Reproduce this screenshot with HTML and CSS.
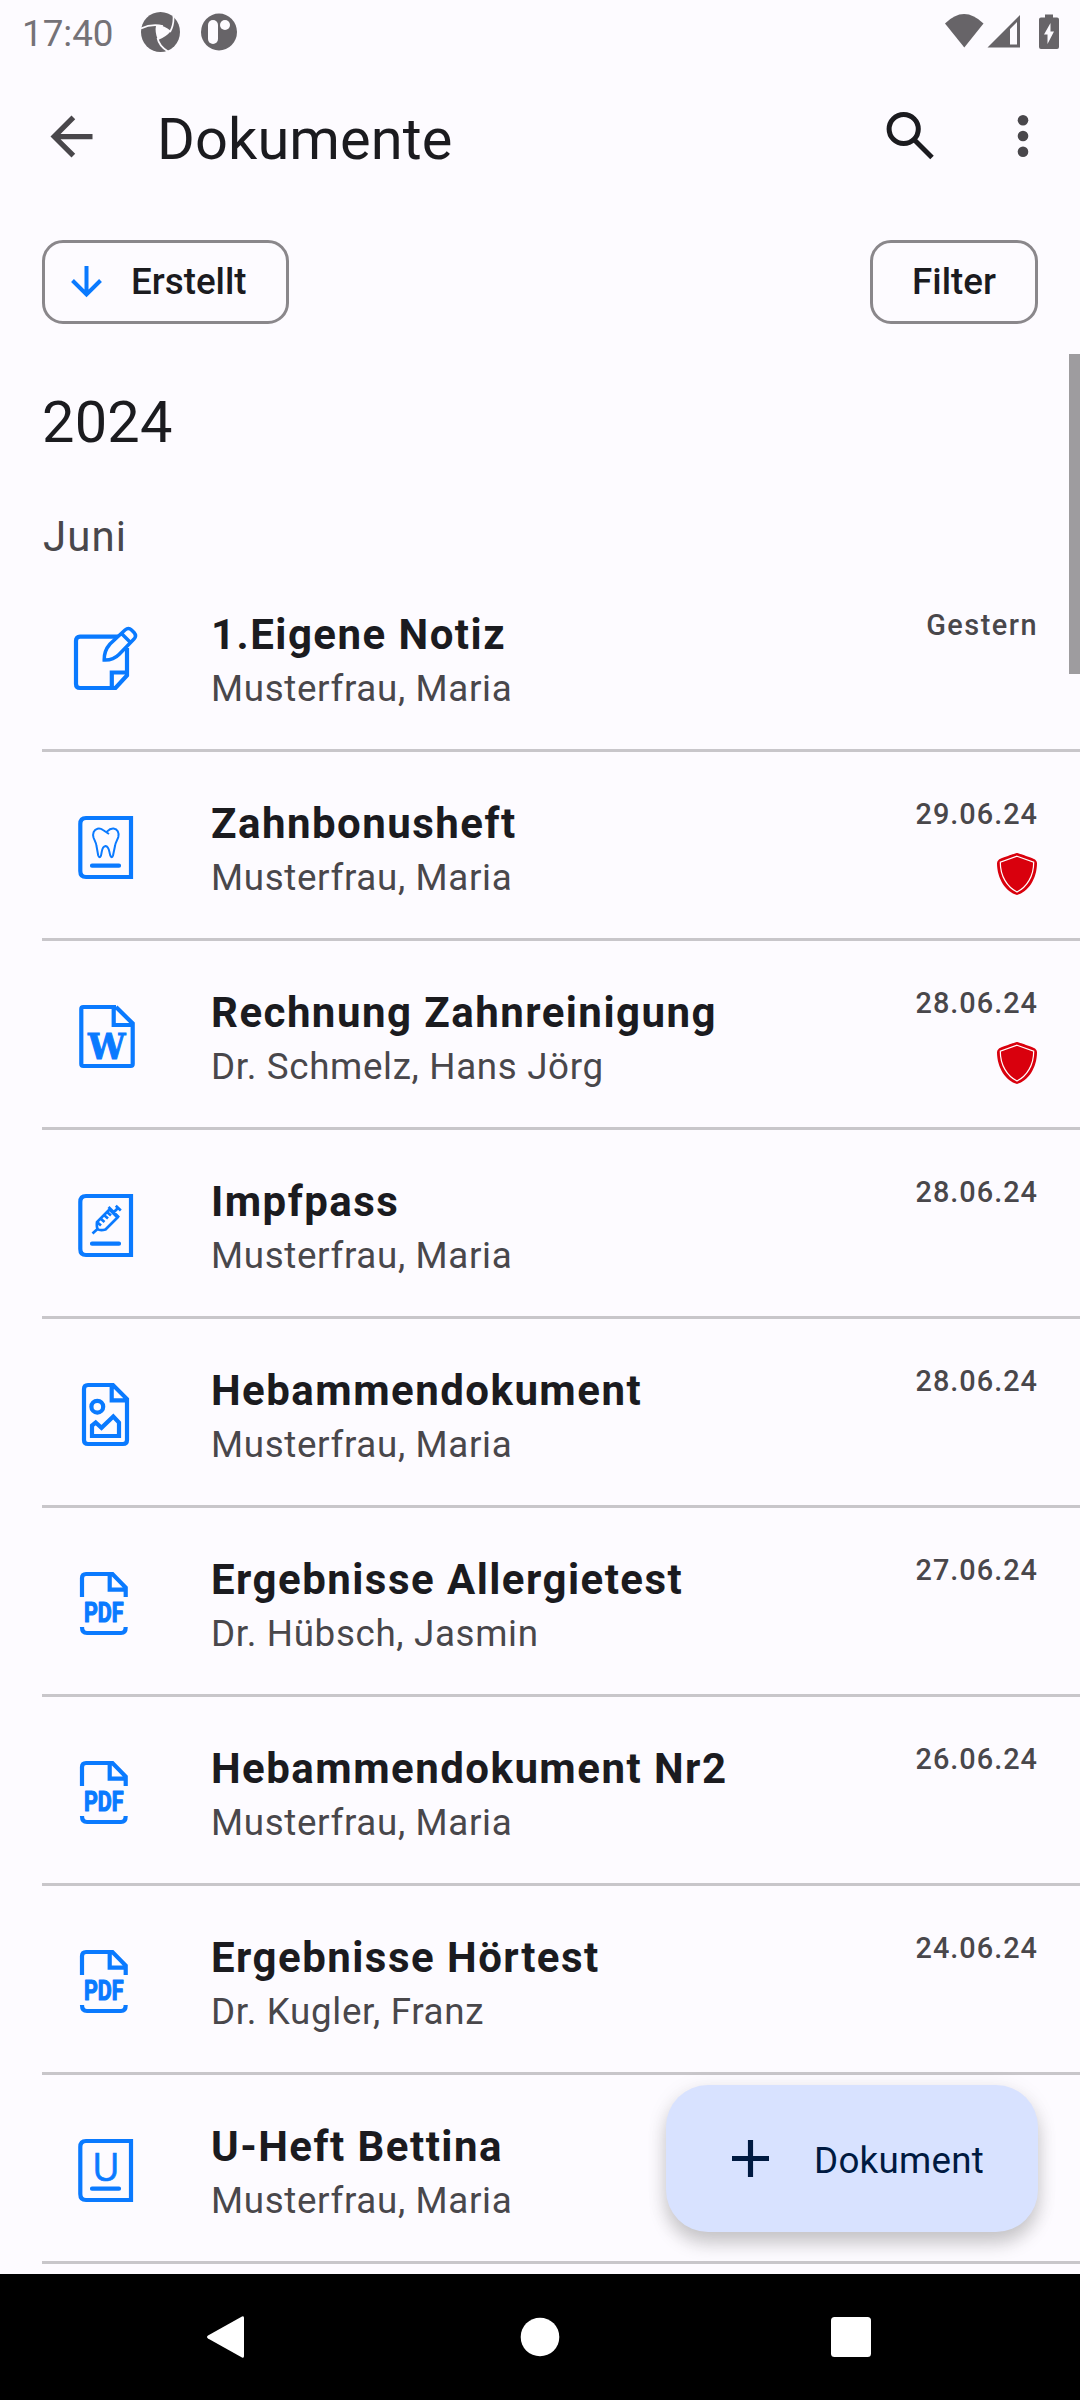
FILE: index.html
```html
<!DOCTYPE html>
<html lang="de">
<head>
<meta charset="utf-8">
<title>Dokumente</title>
<link rel="stylesheet" href="styles.css">
</head>
<body>
<svg width="0" height="0" class="sprite" aria-hidden="true">
  <symbol id="note" viewBox="0 0 72 72"><path d="M50 14.7H12Q8 14.7 8 18.7V62Q8 66 12 66H47.5L59 53.5V26M43.8 66V50.5H59"/><path d="M36.2 38C36 31 38 26.5 42 22L57 8Q60.5 5 63.5 8L66 10.5Q69 14 66 17L51 32.5C47 36.500 43 38.300 36.200 38ZM53.500 11.500L62.500 20.500" stroke-width="3.500"/></symbol>
  <symbol id="book" viewBox="0 0 72 72"><path d="M63 7H18Q12.300 7 12.300 13V60Q12.300 66 18 66H63ZM24 54.700H51" stroke-linecap="round"/></symbol>
  <symbol id="tooth" viewBox="0 0 72 72"><use href="#book"/><path d="M41 23L35 19C33 17.500 31 17.300 29.500 17.700C25.500 18.800 24.500 23 25.500 26.500C26.500 29.500 28 31 28.500 35L30.200 44.500Q31.500 48 33 44.500C34 41 33.500 35.500 37.500 35C41.500 35.500 41 41 42.300 44.500Q44 48 45 44.500L47 35C47.500 31 49.500 29 50.300 26C51.300 21.500 49.500 18 45.500 17.500C42 17.200 40.500 19 38.500 21" stroke-width="2"/></symbol>
  <symbol id="word" viewBox="0 0 72 72"><path d="M48 7H15.300Q13.300 7 13.300 9V64Q13.300 66 15.300 66H62.700Q64.700 66 64.700 64V23.500L48 7M45.700 7V25H64.700"/><text x="20" y="58.500" class="glyph-w" textLength="37.500" lengthAdjust="spacingAndGlyphs">W</text></symbol>
  <symbol id="syringe" viewBox="0 0 72 72"><use href="#book"/><path d="M24.500 44.500L29.500 40M29.500 40Q28.500 38 29 33L41.500 20.500L49.500 28.500L37.500 40.500Q32 42 29.500 40ZM40.500 18L51 28.500M45.500 23.500L50 19M47.800 16.800L52.800 21.500M33 30L36.500 33M36.500 26.500L40 29.500M29.500 33.500L33 36.500M39.500 23.500L43 26.500" stroke-width="2.700"/></symbol>
  <symbol id="image" viewBox="0 0 72 72"><path d="M45 7H20Q16 7 16 11V62Q16 66 20 66H55Q59 66 59 62V21ZM43.700 7V22.300H59M24 58V47.500L27.700 44.500L33.500 49.800L45.300 38.500L51 44.500V58Z"/><circle cx="29.300" cy="28.700" r="5.900"/></symbol>
  <symbol id="pdf" viewBox="0 0 72 72"><path d="M14 30V11Q14 7 18 7H44.500L57.700 20.500V30M41.700 7V22.700H57.700M14 60Q14 66 19 66H53Q57.700 66 57.700 60"/><text x="16" y="55" class="glyph-pdf" textLength="39.500" lengthAdjust="spacingAndGlyphs">PDF</text></symbol>
  <symbol id="ubook" viewBox="0 0 72 72"><use href="#book"/><text x="38" y="46.500" text-anchor="middle" class="glyph-u">U</text></symbol>
  <symbol id="shield" viewBox="0 0 40 42"><path d="M20 0C21 0 37 5.500 38 6.500Q40 8 40 10C40 26 31 39 20 42C9 39 0 26 0 10Q0 8 2 6.500C3 5.500 19 0 20 0Z" fill="#d9000d"/><path d="M20 3.200L36.700 9.200C36.700 23 30 34 20 39C10 34 3.300 23 3.300 9.200Z" fill="none" stroke="#fff" stroke-width="1.200"/></symbol>
</svg>

<header class="status">
  <span class="time">17:40</span>
  <svg class="st-aperture" viewBox="0 0 39 40"><ellipse cx="19.500" cy="20" rx="19.500" ry="20" fill="#676468"/><path d="M15 13.500Q22 12.500 30 19Q25 25 17 28Q13.500 20 15 13.500Z" fill="#fdfbff"/><path d="M0 16.500Q10 11.500 22 14M32.500 4Q33 13 29 20M27 39.500Q18 34 16.500 26" fill="none" stroke="#fdfbff" stroke-width="1.700"/></svg>
  <svg class="st-app" viewBox="0 0 36 38"><ellipse cx="18" cy="19" rx="18" ry="18.500" fill="#676468"/><rect x="7" y="7" width="10" height="24" rx="5" fill="#fdfbff"/><circle cx="24" cy="12" r="5" fill="#fdfbff"/></svg>
  <svg class="st-right" viewBox="0 0 116 36"><g fill="#676468"><path d="M0 9.500Q19-9.500 38.500 9.500L19.300 33.500Z"/><path fill-rule="evenodd" d="M42.500 33.500L75 1V33.500ZM65 30.500H72V8L65 15Z"/><path fill-rule="evenodd" d="M100 0.500H108V3.500H112Q114 3.500 114 5.500V33Q114 35 112 35H96Q94 35 94 33V5.500Q94 3.500 96 3.500H100ZM105.500 9L99 20.500H102.500V30L109 17.500H105.500Z"/></g></svg>
</header>

<div class="appbar">
  <svg class="back" viewBox="0 0 24 24"><path d="M20 11H7.830l5.590-5.590L12 4l-8 8 8 8 1.410-1.410L7.830 13H20v-2z" fill="#49474b"/></svg>
  <h1>Dokumente</h1>
  <svg class="search" viewBox="0 0 63 63"><g fill="none" stroke="#1b1b1f" stroke-width="5"><circle cx="24.700" cy="25" r="14.600"/><path d="M35 35.500L53 53.500"/></g></svg>
  <svg class="more" viewBox="0 0 12 44"><g fill="#49474b"><circle cx="6" cy="6.200" r="5.300"/><circle cx="6" cy="22" r="5.300"/><circle cx="6" cy="37.800" r="5.300"/></g></svg>
</div>

<div class="chips">
  <button class="chip sort"><svg viewBox="0 0 32 32"><path d="M15.500 0V28M1.500 14.500L15.500 28.500L29.500 14.500" fill="none" stroke="#0a7aff" stroke-width="4"/></svg>Erstellt</button>
  <button class="chip filter">Filter</button>
</div>

<main>
  <h2>2024</h2>
  <h3>Juni</h3>
  <ul class="docs">
    <li><svg class="ico"><use href="#note"/></svg><div class="txt"><b>1.Eigene Notiz</b><span>Musterfrau, Maria</span></div><div class="meta word">Gestern</div></li>
    <li><svg class="ico"><use href="#tooth"/></svg><div class="txt"><b>Zahnbonusheft</b><span>Musterfrau, Maria</span></div><div class="meta">29.06.24<svg class="shield"><use href="#shield"/></svg></div></li>
    <li><svg class="ico"><use href="#word"/></svg><div class="txt"><b>Rechnung Zahnreinigung</b><span>Dr. Schmelz, Hans Jörg</span></div><div class="meta">28.06.24<svg class="shield"><use href="#shield"/></svg></div></li>
    <li><svg class="ico"><use href="#syringe"/></svg><div class="txt"><b>Impfpass</b><span>Musterfrau, Maria</span></div><div class="meta">28.06.24</div></li>
    <li><svg class="ico"><use href="#image"/></svg><div class="txt"><b>Hebammendokument</b><span>Musterfrau, Maria</span></div><div class="meta">28.06.24</div></li>
    <li><svg class="ico"><use href="#pdf"/></svg><div class="txt"><b>Ergebnisse Allergietest</b><span>Dr. Hübsch, Jasmin</span></div><div class="meta">27.06.24</div></li>
    <li><svg class="ico"><use href="#pdf"/></svg><div class="txt"><b>Hebammendokument Nr2</b><span>Musterfrau, Maria</span></div><div class="meta">26.06.24</div></li>
    <li><svg class="ico"><use href="#pdf"/></svg><div class="txt"><b>Ergebnisse Hörtest</b><span>Dr. Kugler, Franz</span></div><div class="meta">24.06.24</div></li>
    <li><svg class="ico"><use href="#ubook"/></svg><div class="txt"><b>U-Heft Bettina</b><span>Musterfrau, Maria</span></div></li>
  </ul>
  <div class="scrollbar"></div>
  <button class="fab"><svg viewBox="0 0 38 38"><path d="M19 0V38M0 19H38" stroke="#001a41" stroke-width="5.300"/></svg><span>Dokument</span></button>
</main>

<nav>
  <svg viewBox="0 0 40 44"><path d="M36 1.500Q38 0.500 38 3V41Q38 43.500 36 42.500L2 23.500Q0 22 2 20.500Z"/></svg>
  <svg viewBox="0 0 40 40"><circle cx="20" cy="20" r="19.300"/></svg>
  <svg viewBox="0 0 40 40"><rect width="40" height="40" rx="3.500"/></svg>
</nav>
</body>
</html>
```
FILE: styles.css
```css
* { box-sizing: border-box; }
body {
  margin: 0;
  width: 1080px;
  height: 2400px;
  display: flex;
  flex-direction: column;
  overflow: hidden;
  background: #fdfbff;
  color: #1b1b1f;
  font-family: Roboto, sans-serif;
}
svg { display: block; flex: none; }
.sprite { display: none; }
h1, h2, h3, ul { margin: 0; padding: 0; font-weight: 400; }

.status { height: 66px; display: flex; align-items: center; padding-left: 22px; }
.time { font-size: 36.75px; line-height: 44px; color: #757277; width: 119px; padding-top: 1px; }
.st-aperture { width: 39px; height: 40px; margin-top: -3px; }
.st-app { width: 36px; height: 38px; margin-left: 21px; margin-top: -2px; }
.st-right { width: 116px; height: 36px; margin-left: auto; margin-right: 19px; margin-top: -3px; }

.appbar { height: 140px; display: flex; align-items: center; padding: 0 51px 0 40px; }
.back { width: 63px; height: 63px; }
.appbar h1 { margin-left: 54px; margin-top: 6px; font-size: 57.75px; line-height: 74px; letter-spacing: 0.1px; flex: 1; }
.search { width: 63px; height: 63px; margin-right: 75px; margin-top: -1px; }
.more { width: 12px; height: 44px; }

.chips { height: 148px; padding: 34px 42px 0; display: flex; justify-content: space-between; align-items: flex-start; }
.chip {
  height: 84px;
  padding: 0;
  display: flex;
  align-items: center;
  border: 3px solid #8a878b;
  border-radius: 21px;
  background: none;
  color: #1b1b1f;
  font: 500 36.75px/44px Roboto, sans-serif;
}
.sort { width: 247px; padding-left: 26px; }
.sort svg { width: 32px; height: 32px; margin-right: 28px; }
.filter { width: 168px; justify-content: center; }

main { height: 1920px; position: relative; overflow: hidden; }
h2 { height: 134px; padding: 31px 42px 0; font-size: 57.75px; line-height: 74px; letter-spacing: 0.2px; }
h3 { height: 75px; padding: 17px 43px 0; font-size: 42px; line-height: 63px; letter-spacing: 1.1px; color: #49474b; }
.docs { list-style: none; margin-left: 42px; }
.docs li {
  height: 189px;
  display: flex;
  align-items: flex-start;
  padding-right: 42px;
  border-bottom: 3px solid #c8c6ca;
}
.ico { width: 72px; height: 72px; margin: 59px 0 0 26px; fill: none; stroke: #0a7aff; stroke-width: 4.2; }
.txt { margin: 40px 0 0 71px; flex: 1; display: flex; flex-direction: column; white-space: nowrap; }
.txt b { font-size: 42px; line-height: 63px; font-weight: 700; letter-spacing: 1.47px; }
.txt span { font-size: 36.75px; line-height: 52px; letter-spacing: 0.66px; color: #49474b; margin-top: -3px; }
.meta {
  margin-top: 41px;
  display: flex;
  flex-direction: column;
  align-items: flex-end;
  font-size: 28.875px;
  line-height: 42px;
  font-weight: 500;
  letter-spacing: 1px;
  color: #49474b;
}
.meta.word { letter-spacing: 1.5px; }
.shield { width: 40px; height: 42px; margin-top: 18px; margin-right: 1px; }
.glyph-w { font: 700 36px "DejaVu Serif", serif; fill: #0a7aff; stroke: #0a7aff; stroke-width: 1; }
.glyph-pdf { font: 700 27px Roboto, sans-serif; fill: #0a7aff; stroke: #0a7aff; stroke-width: 1.2; stroke-linejoin: round; }
.glyph-u { font: 400 37.5px "Open Sans", sans-serif; fill: #0a7aff; stroke: #0a7aff; stroke-width: 0.7; }

.scrollbar { position: absolute; right: 0; top: 0; width: 11px; height: 320px; background: #9e9c9f; }
.fab {
  position: absolute;
  right: 42px;
  bottom: 42px;
  width: 372px;
  height: 147px;
  border: 0;
  border-radius: 42px;
  background: #d8e2ff;
  color: #001a41;
  display: flex;
  align-items: center;
  padding: 0 0 0 66px;
  font: 400 36.75px/44px Roboto, sans-serif;
  letter-spacing: 0.26px;
  box-shadow: 0 12px 18px rgba(0, 0, 0, 0.18), 0 3px 22px rgba(0, 0, 0, 0.08);
}
.fab svg { width: 37px; height: 37px; margin-right: 45px; }
.fab span { padding-top: 4px; }

nav { flex: 1; background: #000; display: flex; align-items: center; padding-left: 206px; }
nav svg { width: 40px; height: 40px; fill: #fff; }
nav svg:first-child { height: 44px; margin-right: 274px; }
nav svg:last-child { margin-left: 271px; }
```
